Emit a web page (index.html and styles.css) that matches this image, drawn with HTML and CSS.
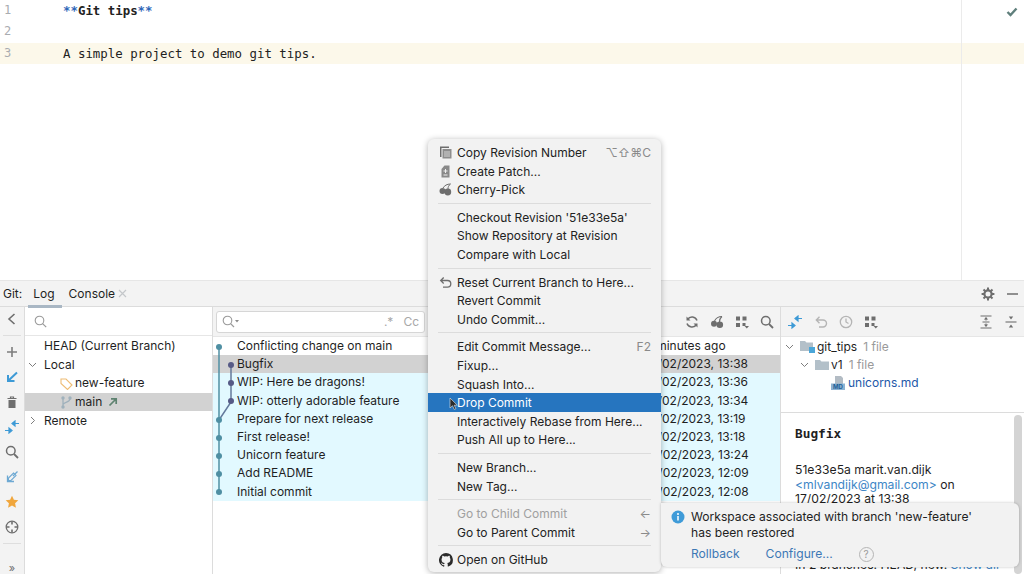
FILE: index.html
```html
<!DOCTYPE html>
<html lang="en">
<head>
    <meta charset="UTF-8">
    <meta name="viewport" content="width=device-width, initial-scale=1.0">
    <title>Git tips</title>
    <link rel="stylesheet" href="styles.css">
</head>
<body>
    <div class="editor">
        <div class="line"><span class="num">1</span><span class="code"><b class="mark">**</b><b>Git tips</b><b class="mark">**</b></span></div>
        <div class="line"><span class="num">2</span><span class="code"></span></div>
        <div class="line current"><span class="num">3</span><span class="code">A simple project to demo git tips.</span></div>
        <div class="guide"></div>
        <svg class="check" width="12" height="10" viewBox="0 0 12 10"><path d="M1.500 5l3 3 6-6.500" fill="none" stroke="#5f7f7c" stroke-width="2.400"/></svg>
    </div>

    <div class="tool">
        <div class="tabs">
            <span class="tool-name">Git:</span>
            <span class="tab active">Log</span>
            <span class="tab">Console</span>
            <svg class="tab-x" width="9" height="9" viewBox="0 0 9 9"><path d="M1 1l7 7M8 1l-7 7" stroke="#c4c7ca" stroke-width="1.200"/></svg>
            <span class="spacer"></span>
            <svg class="ico" width="14" height="14" viewBox="0 0 14 14"><circle cx="7" cy="7" r="3.600" fill="none" stroke="#6e6e6e" stroke-width="2.200"/><path d="M7 .6v2.600M7 10.800v2.600M.6 7h2.600M10.800 7h2.600M2.500 2.500l1.800 1.800M9.700 9.700l1.800 1.800M11.500 2.500L9.700 4.300M4.300 9.700l-1.800 1.800" stroke="#6e6e6e" stroke-width="2"/></svg>
            <svg class="ico min" width="11" height="2" viewBox="0 0 11 2"><path d="M0 1h11" stroke="#6e6e6e" stroke-width="1.500"/></svg>
        </div>

        <div class="panes">
            <div class="side">
                <svg class="side-ico" width="14" height="14" viewBox="0 0 14 14"><path d="M9.500 2L4 7l5.500 5" fill="none" stroke="#6e6e6e" stroke-width="1.600"/></svg>
                <div class="side-sep"></div>
                <svg class="side-ico" width="14" height="14" viewBox="0 0 14 14"><path d="M7 2v10M2 7h10" stroke="#7d7d7d" stroke-width="1.600"/></svg>
                <svg class="side-ico" width="14" height="14" viewBox="0 0 14 14"><path d="M12 2.500L3.500 10.500M3 5v6h6.500" fill="none" stroke="#3d9ad6" stroke-width="2"/></svg>
                <svg class="side-ico" width="14" height="14" viewBox="0 0 14 14"><path d="M2.500 3.500h9M5.500 3.500V2h3v1.500" fill="none" stroke="#6e6e6e" stroke-width="1.200"/><path d="M3.500 5h7v8h-7z" fill="#6e6e6e"/></svg>
                <svg class="side-ico" width="16" height="14" viewBox="0 0 16 14"><path d="M1 10.500h4.500M5 8v5l3-2.500zM15 3.500h-4.500M11 1v5L8 3.500z" fill="#3d9ad6" stroke="#3d9ad6" stroke-width="1.200"/></svg>
                <svg class="side-ico" width="14" height="14" viewBox="0 0 14 14"><circle cx="5.800" cy="5.800" r="4.300" fill="none" stroke="#6e6e6e" stroke-width="1.500"/><path d="M9 9l4 4" stroke="#6e6e6e" stroke-width="1.800"/></svg>
                <svg class="side-ico" width="14" height="14" viewBox="0 0 14 14"><path d="M12.500 1.500L8 6M2.500 5.500V11.500H9" fill="none" stroke="#6ea9d3" stroke-width="1.300"/><path d="M8.500 3L11 5.500 6 10.500H3.500V8z" fill="none" stroke="#6ea9d3" stroke-width="1.100"/></svg>
                <svg class="side-ico" width="14" height="14" viewBox="0 0 14 14"><path d="M7 .8l1.900 4 4.400.5-3.200 3 .8 4.400L7 10.600l-3.900 2.100.8-4.400-3.200-3 4.400-.5z" fill="#f0a63c"/></svg>
                <svg class="side-ico" width="14" height="14" viewBox="0 0 14 14"><circle cx="7" cy="7" r="5.800" fill="none" stroke="#6e6e6e" stroke-width="1.300"/><path d="M7 1.500v3M7 9.500v3M1.500 7h3M9.500 7h3" stroke="#6e6e6e" stroke-width="1.600"/></svg>
                <div class="side-sep low"></div>
                <span class="more">»</span>
            </div>

            <div class="branches">
                <div class="search-row">
                    <svg width="13" height="13" viewBox="0 0 13 13"><circle cx="5.500" cy="5.500" r="4.300" fill="none" stroke="#9a9a9a" stroke-width="1.100"/><path d="M8.600 8.600l3.600 3.600" stroke="#9a9a9a" stroke-width="1.200"/></svg>
                </div>
                <div class="b-row head">HEAD (Current Branch)</div>
                <div class="b-row folder"><svg class="chev" width="9" height="9" viewBox="0 0 9 9"><path d="M1 3l3.500 3.500L8 3" fill="none" stroke="#7d7d7d"/></svg>Local</div>
                <div class="b-row leaf"><svg width="13" height="13" viewBox="0 0 13 13"><path d="M1 2h5l6 6-4.500 4.500-6.500-6z" fill="none" stroke="#eebc74" stroke-width="1.100"/></svg>new-feature</div>
                <div class="b-row leaf selected"><svg width="13" height="13" viewBox="0 0 13 13"><path d="M3 2v9M10 2.500c0 4-5 3-7 6" fill="none" stroke="#9fb1bc" stroke-width="1.300"/><g fill="#9fb1bc"><circle cx="3" cy="2" r="1.700"/><circle cx="3" cy="11" r="1.700"/><circle cx="10" cy="2" r="1.700"/></g></svg>main<svg class="track" width="10" height="10" viewBox="0 0 10 10"><path d="M1.500 8.500L8 2M3 1.800h5.200V7" fill="none" stroke="#5e8270" stroke-width="1.700"/></svg></div>
                <div class="b-row folder"><svg class="chev" width="9" height="9" viewBox="0 0 9 9"><path d="M3 1l3.500 3.500L3 8" fill="none" stroke="#7d7d7d"/></svg>Remote</div>
            </div>

            <div class="commits">
                <div class="commit-bar">
                    <div class="filter">
                        <svg width="18" height="13" viewBox="0 0 18 13"><circle cx="5.500" cy="5.500" r="4.300" fill="none" stroke="#9a9a9a" stroke-width="1.100"/><path d="M8.600 8.600l3.400 3.400" stroke="#9a9a9a" stroke-width="1.200"/><path d="M13 5h4l-2 2.500z" fill="#8a8a8a"/></svg>
                        <span class="spacer"></span>
                        <span class="filter-opt">.*</span>
                        <span class="filter-opt">Cc</span>
                    </div>
                    <span class="spacer"></span>
                    <svg class="ico" width="14" height="14" viewBox="0 0 14 14"><path d="M12 5.500A5.200 5.200 0 0 0 2.600 4.500M2 8.500a5.200 5.200 0 0 0 9.400 1" fill="none" stroke="#6e6e6e" stroke-width="1.500"/><path d="M1.500 1.500v4h4zM12.500 12.500v-4h-4z" fill="#6e6e6e"/></svg>
                    <svg class="ico" width="14" height="14" viewBox="0 0 14 14"><circle cx="9.800" cy="9.800" r="3.300" fill="#6e6e6e"/><circle cx="4" cy="8.800" r="3" fill="#6e6e6e"/><path d="M4.500 6C6 3 8.500 1.500 12 1.500M9.500 7c0-2 .5-4 2.500-5.500" fill="none" stroke="#6e6e6e" stroke-width="1.100"/></svg>
                    <svg class="ico" width="14" height="14" viewBox="0 0 14 14"><path d="M1 1.500h4v4H1zM7.500 1.500h4v4h-4zM1 8h4v4H1zM7.500 8h3v3h-3z" fill="#6e6e6e"/><path d="M9.500 11h4.500l-2.200 2.500z" fill="#6e6e6e"/></svg>
                    <svg class="ico" width="14" height="14" viewBox="0 0 14 14"><circle cx="5.800" cy="5.800" r="4.300" fill="none" stroke="#6e6e6e" stroke-width="1.500"/><path d="M9 9l4 4" stroke="#6e6e6e" stroke-width="1.800"/></svg>
                </div>
                <div class="rows">
                    <div class="row"><span class="subject">Conflicting change on main</span><span class="date">7 minutes ago</span></div>
                    <div class="row picked"><span class="subject">Bugfix</span><span class="date">17/02/2023, 13:38</span></div>
                    <div class="row cur"><span class="subject">WIP: Here be dragons!</span><span class="date">17/02/2023, 13:36</span></div>
                    <div class="row cur"><span class="subject">WIP: otterly adorable feature</span><span class="date">17/02/2023, 13:34</span></div>
                    <div class="row cur"><span class="subject">Prepare for next release</span><span class="date">17/02/2023, 13:19</span></div>
                    <div class="row cur"><span class="subject">First release!</span><span class="date">17/02/2023, 13:18</span></div>
                    <div class="row cur"><span class="subject">Unicorn feature</span><span class="date">16/02/2023, 13:24</span></div>
                    <div class="row cur"><span class="subject">Add README</span><span class="date">16/02/2023, 12:09</span></div>
                    <div class="row cur"><span class="subject">Initial commit</span><span class="date">16/02/2023, 12:08</span></div>
                    <svg class="graph" width="24" height="164" viewBox="0 0 24 164">
                        <path d="M6 9v146" stroke="#4f8fa3" stroke-width="1.500"/>
                        <path d="M18 27v37L6 82" fill="none" stroke="#64799c" stroke-width="1.500"/>
                        <g fill="#4f8fa3"><circle cx="6" cy="9" r="3"/><circle cx="6" cy="82" r="3"/><circle cx="6" cy="100" r="3"/><circle cx="6" cy="118" r="3"/><circle cx="6" cy="136" r="3"/><circle cx="6" cy="154" r="3"/></g>
                        <g fill="#565a86"><circle cx="18" cy="27" r="3"/><circle cx="18" cy="45" r="3"/><circle cx="18" cy="63" r="3"/></g>
                    </svg>
                </div>
            </div>

            <div class="changes">
                <div class="change-bar">
                    <svg class="ico" width="16" height="14" viewBox="0 0 16 14"><path d="M1 10.500h4.500M5 8v5l3-2.500zM15 3.500h-4.500M11 1v5L8 3.500z" fill="#3d9ad6" stroke="#3d9ad6" stroke-width="1.200"/></svg>
                    <svg class="ico" width="14" height="14" viewBox="0 0 14 14"><path d="M3 5h6a3.500 3.500 0 0 1 0 7H5M5.500 1.800L2.300 5l3.200 3.200" fill="none" stroke="#b5b5b5" stroke-width="1.400"/></svg>
                    <svg class="ico" width="14" height="14" viewBox="0 0 14 14"><circle cx="7" cy="7" r="5.700" fill="none" stroke="#b5b5b5" stroke-width="1.300"/><path d="M7 3.500V7l2.500 1.500" fill="none" stroke="#b5b5b5" stroke-width="1.300"/></svg>
                    <svg class="ico" width="14" height="14" viewBox="0 0 14 14"><path d="M1 1.500h4v4H1zM7.500 1.500h4v4h-4zM1 8h4v4H1zM7.500 8h3v3h-3z" fill="#6e6e6e"/><path d="M9.500 11h4.500l-2.200 2.500z" fill="#6e6e6e"/></svg>
                    <span class="spacer"></span>
                    <svg class="ico" width="14" height="14" viewBox="0 0 14 14"><path d="M1.500 1h11M1.500 13h11M3.500 7h7M7 2.500v3M7 8.500v3" stroke="#6e6e6e" stroke-width="1.100"/><path d="M4.800 4.500L7 2.300l2.200 2.200zM4.800 9.500L7 11.700l2.200-2.200z" fill="#6e6e6e"/></svg>
                    <svg class="ico" width="14" height="14" viewBox="0 0 14 14"><path d="M1.500 7h11" stroke="#6e6e6e" stroke-width="1.100"/><path d="M4.800 1.500L7 4.500l2.200-3zM4.800 12.500L7 9.500l2.200 3z" fill="#6e6e6e"/></svg>
                </div>
                <div class="tree">
                    <div class="t-row t0"><svg width="9" height="9" viewBox="0 0 9 9"><path d="M1 3l3.500 3.500L8 3" fill="none" stroke="#7d7d7d"/></svg><svg class="fold" width="15" height="13" viewBox="0 0 15 13"><path d="M0 1h5l1.500 1.500H13V11H0z" fill="#b3c0c9"/><path d="M9 7h6v6H9z" fill="#4ba6d8"/></svg>git_tips<span class="count">1 file</span></div>
                    <div class="t-row t1"><svg width="9" height="9" viewBox="0 0 9 9"><path d="M1 3l3.500 3.500L8 3" fill="none" stroke="#7d7d7d"/></svg><svg class="fold" width="14" height="12" viewBox="0 0 14 12"><path d="M0 1h5l1.500 1.500H14V11H0z" fill="#b3c0c9"/></svg>v1<span class="count">1 file</span></div>
                    <div class="t-row t2"><svg width="15" height="14" viewBox="0 0 15 14"><path d="M4 0h6l2 2v6H4z" fill="#b3bcc4"/><path d="M0 7.500h14v6.500H0z" fill="#8db2d2"/><text x="7" y="13" font-size="6" font-weight="bold" text-anchor="middle" fill="#1d5e96">MD</text></svg><span class="file">unicorns.md</span></div>
                </div>
                <div class="detail">
                    <div class="detail-title">Bugfix</div>
                    <div class="detail-text">51e33e5a marit.van.dijk<br><a>&lt;mlvandijk@gmail.com&gt;</a> on<br>17/02/2023 at 13:38</div>
                    <div class="detail-text branches-in">In 2 branches: HEAD, new. <a>Show all</a></div>
                    <div class="scroll"></div>
                </div>
            </div>
        </div>
    </div>

    <div class="menu">
        <div class="item"><svg width="13" height="13" viewBox="0 0 13 13"><path d="M1 .5h9v1.500H2.500V11H1z" fill="#6e6e6e"/><path d="M3.500 3h9v9.500h-9z" fill="#8d8d8d"/><path d="M5 6h6M5 8h6M5 10h6" stroke="#e8e8e8" stroke-width=".8"/></svg><span>Copy Revision Number</span><kbd>⌥⇧⌘C</kbd></div>
        <div class="item"><svg width="13" height="13" viewBox="0 0 13 13"><path d="M5.500.5h5v12h-8V4z" fill="#8a8a8a"/><path d="M4.500 6h4M6.500 4v4M4.500 10h4" stroke="#f0f0f0"/></svg><span>Create Patch...</span></div>
        <div class="item"><svg width="13" height="13" viewBox="0 0 13 13"><circle cx="8.800" cy="9" r="3.400" fill="#6e6e6e"/><circle cx="3.500" cy="8" r="3" fill="#6e6e6e"/><path d="M4 5c1.500-2.500 4-4 7.500-4M9 6c0-2 .5-3.500 2.500-5" fill="none" stroke="#6e6e6e"/></svg><span>Cherry-Pick</span></div>
        <div class="sep"></div>
        <div class="item"><span>Checkout Revision '51e33e5a'</span></div>
        <div class="item"><span>Show Repository at Revision</span></div>
        <div class="item"><span>Compare with Local</span></div>
        <div class="sep"></div>
        <div class="item"><svg width="13" height="13" viewBox="0 0 13 13"><path d="M2 4.500h6.500a3.300 3.300 0 0 1 0 6.600H4M4.700 1.500L1.700 4.500l3 3" fill="none" stroke="#6e6e6e" stroke-width="1.300"/></svg><span>Reset Current Branch to Here...</span></div>
        <div class="item"><span>Revert Commit</span></div>
        <div class="item"><span>Undo Commit...</span></div>
        <div class="sep"></div>
        <div class="item"><span>Edit Commit Message...</span><kbd>F2</kbd></div>
        <div class="item"><span>Fixup...</span></div>
        <div class="item"><span>Squash Into...</span></div>
        <div class="item hot"><svg width="9" height="13" viewBox="0 0 9 13"><path d="M1 1v10l2.500-2.300L5.300 12.500l1.600-.8-1.700-3.500H8.300z" fill="#2b2b2b" stroke="#e8e8e8" stroke-width=".6"/></svg><span>Drop Commit</span></div>
        <div class="item"><span>Interactively Rebase from Here...</span></div>
        <div class="item"><span>Push All up to Here...</span></div>
        <div class="sep"></div>
        <div class="item"><span>New Branch...</span></div>
        <div class="item"><span>New Tag...</span></div>
        <div class="sep"></div>
        <div class="item off"><span>Go to Child Commit</span><kbd>←</kbd></div>
        <div class="item"><span>Go to Parent Commit</span><kbd>→</kbd></div>
        <div class="sep"></div>
        <div class="item"><svg width="14" height="14" viewBox="0 0 16 16"><path fill="#2b2b2b" d="M8 0a8 8 0 0 0-2.500 15.600c.4.100.5-.2.500-.4v-1.400c-2.200.5-2.700-1-2.700-1-.4-.9-.9-1.200-.9-1.200-.7-.5.100-.5.100-.5.800.1 1.200.8 1.200.8.700 1.200 1.900.9 2.300.7.100-.5.300-.9.500-1.100-1.800-.2-3.600-.9-3.600-4 0-.9.300-1.600.8-2.100-.1-.2-.4-1 .1-2.100 0 0 .7-.2 2.200.8a7.600 7.600 0 0 1 4 0c1.500-1 2.200-.8 2.200-.8.400 1.100.2 1.900.1 2.100.5.600.8 1.300.8 2.100 0 3.100-1.900 3.700-3.700 3.900.3.300.6.800.6 1.500v2.200c0 .2.100.5.600.4A8 8 0 0 0 8 0z"/></svg><span>Open on GitHub</span></div>
    </div>

    <div class="toast">
        <div class="toast-main">
            <svg width="14" height="14" viewBox="0 0 14 14"><circle cx="7" cy="7" r="6.500" fill="#3f9bd8"/><path d="M7 6v4.500" stroke="#fff" stroke-width="1.500"/><circle cx="7" cy="3.900" r="1" fill="#fff"/></svg>
            <div>Workspace associated with branch 'new-feature'<br>has been restored</div>
        </div>
        <div class="toast-links">
            <a>Rollback</a>
            <a>Configure...</a>
            <span class="help">?</span>
        </div>
    </div>
</body>
</html>
```
FILE: styles.css
```css
html, body {
    margin: 0;
    height: 574px;
    overflow: hidden;
}
body {
    position: relative;
    background: #fff;
    color: #1f1f1f;
    font-family: "Inter", "Liberation Sans", sans-serif;
    font-size: 12px;
}
svg {
    display: block;
    flex: none;
}
.spacer {
    flex: 1;
}

/* editor */
.editor {
    position: relative;
    height: 280px;
    font-family: "DejaVu Sans Mono", monospace;
    font-size: 12.400px;
}
.line {
    display: flex;
    height: 21.300px;
    line-height: 21.300px;
}
.line.current {
    background: #fcf8ea;
}
.num {
    width: 63px;
    padding-left: 4px;
    box-sizing: border-box;
    color: #a9acb0;
    font-size: 12px;
}
.code {
    color: #222;
    white-space: pre;
}
.mark {
    color: #2f66b8;
}
.guide {
    position: absolute;
    left: 961px;
    top: 0;
    bottom: 0;
    width: 1px;
    background: #ebebeb;
}
.check {
    position: absolute;
    left: 1006px;
    top: 7px;
}

/* tool window */
.tool {
    height: 294px;
    display: flex;
    flex-direction: column;
}
.tabs {
    height: 25px;
    border-top: 1px solid #e6e6e6;
    border-bottom: 1px solid #dcdcdc;
    background: #f3f3f3;
    display: flex;
    align-items: center;
    padding: 0 6px 0 3px;
}
.tool-name {
    margin-right: 11px;
}
.tab {
    position: relative;
    margin-right: 14px;
}
.tab.active::after {
    content: "";
    position: absolute;
    left: -5px;
    right: -7px;
    bottom: -7px;
    height: 3px;
    background: #a9b7c4;
}
.tab-x {
    margin-left: -11px;
}
.min {
    margin-left: 12px;
}
.panes {
    flex: 1;
    display: flex;
    min-height: 0;
}

/* left toolbar */
.side {
    width: 24px;
    flex: none;
    background: #f3f3f3;
    border-right: 1px solid #dcdcdc;
    display: flex;
    flex-direction: column;
    align-items: center;
    gap: 11px;
    padding-top: 5px;
}
.side-ico {
    height: 14px;
}
.side-sep {
    width: 18px;
    height: 1px;
    background: #dedede;
    margin: -2px 0;
}
.side-sep.low {
    margin: -2px 0 8px;
}
.more {
    font-size: 11px;
    line-height: 10px;
    color: #6e6e6e;
}

/* branches */
.branches {
    width: 187px;
    flex: none;
    border-right: 1px solid #dcdcdc;
}
.search-row {
    height: 28px;
    border-bottom: 1px solid #e6e6e6;
    display: flex;
    align-items: center;
    padding-left: 9px;
    margin-bottom: 1px;
}
.b-row {
    height: 18.600px;
    line-height: 20px;
    display: flex;
    align-items: center;
    white-space: nowrap;
}
.b-row.head {
    padding-left: 19px;
}
.b-row.folder {
    padding-left: 3px;
}
.chev {
    margin-right: 7px;
}
.b-row.leaf {
    padding-left: 35px;
}
.b-row.leaf svg:first-child {
    margin-right: 2px;
}
.b-row.selected {
    background: #d2d2d2;
}
.track {
    margin-left: 6px;
}

/* commits */
.commits {
    width: 568px;
    flex: none;
    border-right: 1px solid #dcdcdc;
    box-sizing: border-box;
}
.commit-bar {
    height: 30px;
    background: #f3f3f3;
    border-bottom: 1px solid #e6e6e6;
    box-sizing: border-box;
    display: flex;
    align-items: center;
    gap: 11px;
    padding: 0 6px 0 3px;
}
.filter {
    width: 209px;
    height: 22px;
    box-sizing: border-box;
    background: #fff;
    border: 1px solid #d6d6d6;
    border-radius: 3px;
    display: flex;
    align-items: center;
    padding: 0 5px;
    gap: 10px;
}
.filter-opt {
    color: #a8a8a8;
}
.rows {
    position: relative;
}
.row {
    height: 18.200px;
    line-height: 18.600px;
    display: flex;
    white-space: nowrap;
    padding-left: 24px;
}
.row.cur {
    background: #e2f9ff;
}
.row.picked {
    background: #d2d2d2;
}
.subject {
    width: 409px;
}
.graph {
    position: absolute;
    left: 0;
    top: 1px;
}

/* changes */
.changes {
    flex: 1;
    min-width: 0;
    display: flex;
    flex-direction: column;
}
.change-bar {
    height: 30px;
    background: #f3f3f3;
    border-bottom: 1px solid #e6e6e6;
    box-sizing: border-box;
    display: flex;
    align-items: center;
    gap: 11px;
    padding: 0 6px;
}
.tree {
    height: 75px;
    border-bottom: 1px solid #dcdcdc;
}
.t-row {
    height: 18.400px;
    display: flex;
    align-items: center;
    white-space: nowrap;
}
.t0 {
    padding-left: 4px;
}
.t1 {
    padding-left: 19px;
}
.t2 {
    padding-left: 50px;
}
.t2 svg {
    margin-right: 2px;
}
.fold {
    margin: 0 2px 0 6px;
}
.count {
    color: #9a9a9a;
    margin-left: 6px;
}
.file {
    color: #2257a8;
}
.detail {
    position: relative;
    flex: 1;
    min-height: 0;
    padding: 14px 14px 0;
    font-size: 12.200px;
    line-height: 14.800px;
}
.detail-title {
    font-family: "DejaVu Sans Mono", monospace;
    font-weight: bold;
    font-size: 12.800px;
    margin-bottom: 21px;
}
.detail a {
    color: #3d86c6;
}
.branches-in {
    margin-top: 51px;
    white-space: nowrap;
}
.scroll {
    position: absolute;
    right: 2px;
    top: 2px;
    bottom: 0;
    width: 8px;
    border-radius: 4px;
    background: #d4d4d4;
}

/* context menu */
.menu {
    position: absolute;
    left: 428px;
    top: 139px;
    width: 233px;
    height: 433px;
    box-sizing: border-box;
    padding: 4px 0;
    background: #f2f2f2;
    border-radius: 6px;
    box-shadow: 0 1px 6px rgba(0, 0, 0, .3);
}
.item {
    position: relative;
    height: 18.600px;
    line-height: 19px;
    padding: 0 10px 0 29px;
    display: flex;
    justify-content: space-between;
    white-space: nowrap;
    color: #222;
}
.item svg {
    position: absolute;
    left: 11px;
    top: 3px;
}
.item kbd {
    font-family: inherit;
    color: #8a8a8a;
}
.item.hot {
    background: #2675bf;
    color: #fff;
}
.item.hot svg {
    left: 21px;
    top: 4px;
}
.item.off {
    color: #a0a0a0;
}
.sep {
    height: 1px;
    margin: 4px 10px;
    background: #dcdcdc;
}

/* notification */
.toast {
    position: absolute;
    left: 661px;
    top: 503px;
    width: 358px;
    height: 64px;
    box-sizing: border-box;
    padding: 6px 0 0 10px;
    background: #f2f2f2;
    border-radius: 0 6px 6px 6px;
    box-shadow: 0 0 3px rgba(0, 0, 0, .25);
    font-size: 12.100px;
    line-height: 16px;
}
.toast-main {
    display: flex;
    gap: 6px;
}
.toast-main svg {
    margin-top: 1px;
}
.toast-links {
    display: flex;
    align-items: center;
    margin: 5px 0 0 20px;
    gap: 26px;
}
.toast-links a {
    color: #3d78b5;
}
.help {
    width: 13px;
    height: 13px;
    border: 1px solid #b5b5b5;
    border-radius: 50%;
    color: #9a9a9a;
    font-size: 10px;
    line-height: 13px;
    text-align: center;
}
```
